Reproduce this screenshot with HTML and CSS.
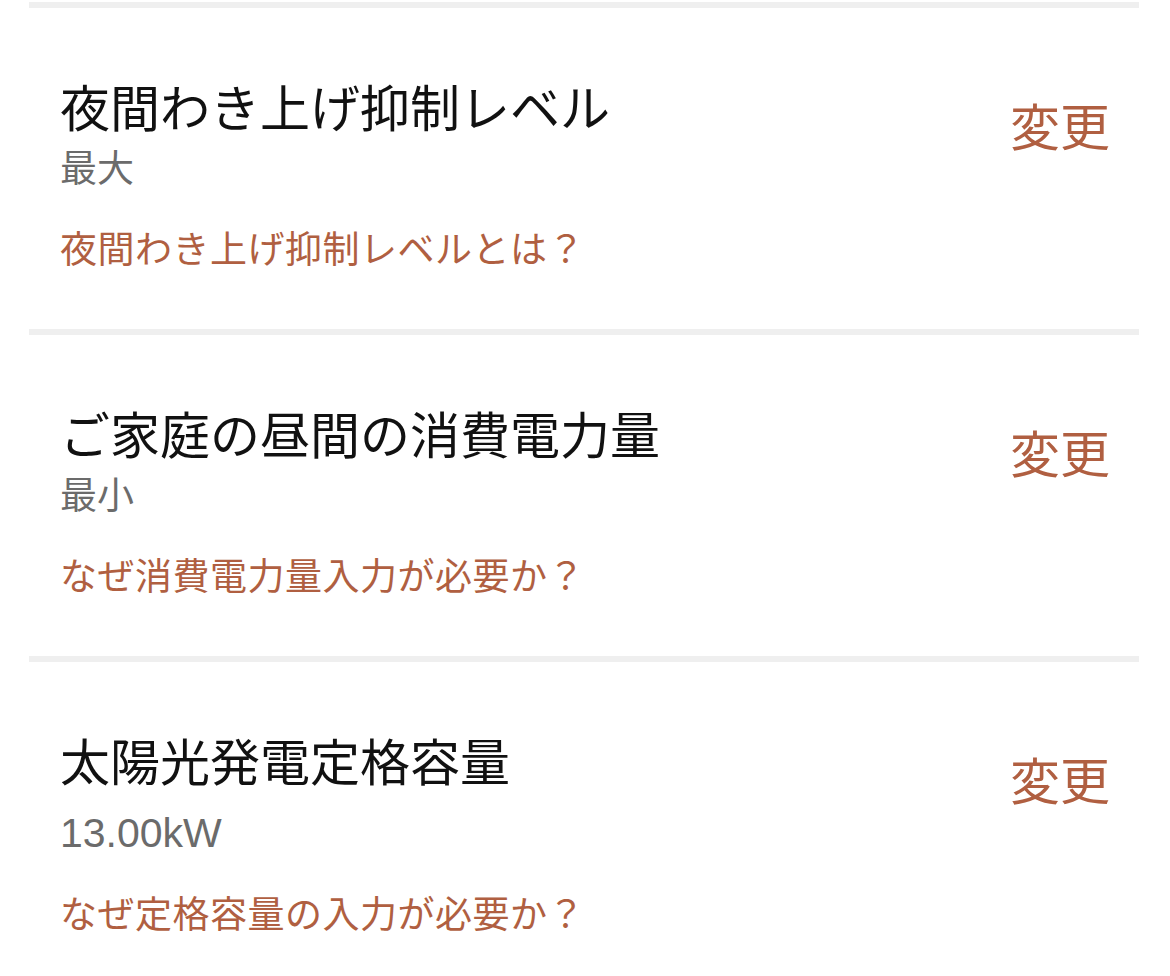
FILE: index.html
```html
<!DOCTYPE html>
<html lang="ja">
<head>
<meta charset="utf-8">
<title>設定</title>
<link rel="stylesheet" href="styles.css">
</head>
<body>
<ul class="settings">
  <li class="setting">
    <div class="setting-text">
      <div class="setting-title">夜間わき上げ抑制レベル</div>
      <div class="setting-value">最大</div>
      <a class="setting-help">夜間わき上げ抑制レベルとは？</a>
    </div>
    <a class="setting-change">変更</a>
  </li>
  <li class="setting">
    <div class="setting-text">
      <div class="setting-title">ご家庭の昼間の消費電力量</div>
      <div class="setting-value">最小</div>
      <a class="setting-help">なぜ消費電力量入力が必要か？</a>
    </div>
    <a class="setting-change">変更</a>
  </li>
  <li class="setting">
    <div class="setting-text">
      <div class="setting-title">太陽光発電定格容量</div>
      <div class="setting-value setting-value--numeric">13.00kW</div>
      <a class="setting-help">なぜ定格容量の入力が必要か？</a>
    </div>
    <a class="setting-change">変更</a>
  </li>
</ul>
</body>
</html>
```

FILE: styles.css
```css
html, body {
  margin: 0;
  padding: 0;
  background: #ffffff;
}

body {
  font-family: "Noto Sans CJK JP", "Noto Sans", sans-serif;
  padding-top: 2px;
}

.settings {
  list-style: none;
  margin: 0;
  padding: 0;
}

.setting {
  box-sizing: border-box;
  height: 327px;
  margin: 0 31px 0 29px;
  border-top: 6px solid #efefef;
  padding: 72px 29px 0 31px;
  display: flex;
  justify-content: space-between;
  align-items: flex-start;
}

.setting-text {
  display: flex;
  flex-direction: column;
  align-items: flex-start;
}

.setting-title {
  font-size: 50px;
  line-height: 50px;
  color: #111111;
}

.setting-value {
  margin-top: 18px;
  font-size: 37px;
  line-height: 37px;
  color: #6b6b6b;
}

.setting-value--numeric {
  margin-top: 32px;
  font-family: "Liberation Sans", "Noto Sans CJK JP", sans-serif;
  font-size: 41px;
  line-height: 34px;
}

.setting-help {
  margin-top: 44px;
  font-size: 37px;
  line-height: 37px;
  letter-spacing: 0.5px;
  color: #b05f41;
}

.setting-change {
  margin-top: 19px;
  font-size: 50px;
  line-height: 50px;
  color: #b05f41;
}
```
